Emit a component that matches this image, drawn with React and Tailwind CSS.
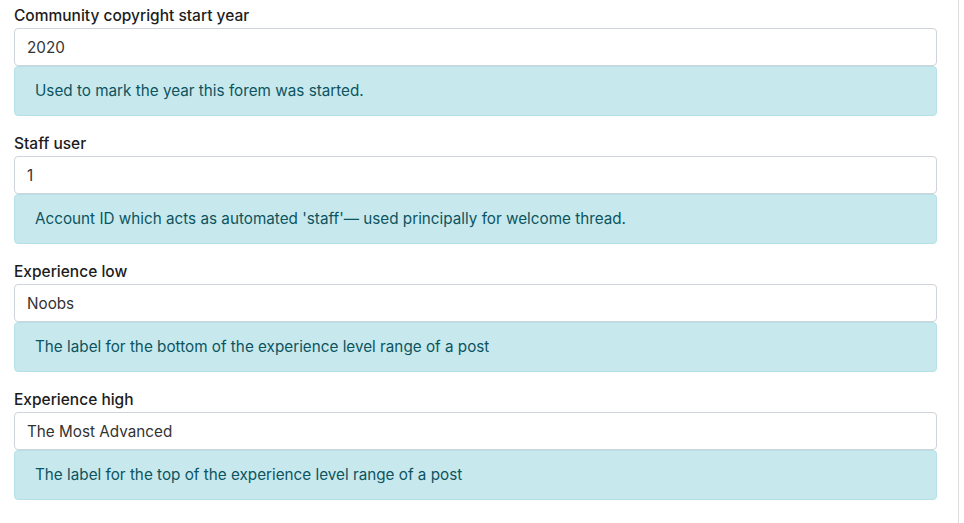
import React from 'react';

const fields = [
  { label: 'Community copyright start year', value: '2020', help: 'Used to mark the year this forem was started.' },
  { label: 'Staff user', value: '1', help: "Account ID which acts as automated 'staff'\u2014 used principally for welcome thread." },
  { label: 'Experience low', value: 'Noobs', help: 'The label for the bottom of the experience level range of a post' },
  { label: 'Experience high', value: 'The Most Advanced', help: 'The label for the top of the experience level range of a post' },
];

function Field({ label, value, help }) {
  return (
    <div className="mb-4">
      <label className="block text-[15.5px] font-medium leading-6 text-[#1c1c1c]">{label}</label>
      <input
        type="text"
        defaultValue={value}
        className="block w-full h-[38px] px-3 border border-[#ced4da] rounded bg-white text-[15.25px] text-[#333] outline-none"
      />
      <div className="px-5 py-3 leading-6 text-[15.25px] text-[#0c5460] bg-[#c7e9ee] border border-[#b7e0e6] rounded">
        {help}
      </div>
    </div>
  );
}

export default function App() {
  return (
    <div className="w-full h-[523px] bg-white flex" style={{ fontFamily: 'Inter, "Liberation Sans", sans-serif' }}>
      <div className="w-[959px] border-r border-[#dcdcdc] pl-[14px] pr-[21px] pt-1">
        {fields.map((f) => (
          <Field key={f.label} {...f} />
        ))}
      </div>
    </div>
  );
}
